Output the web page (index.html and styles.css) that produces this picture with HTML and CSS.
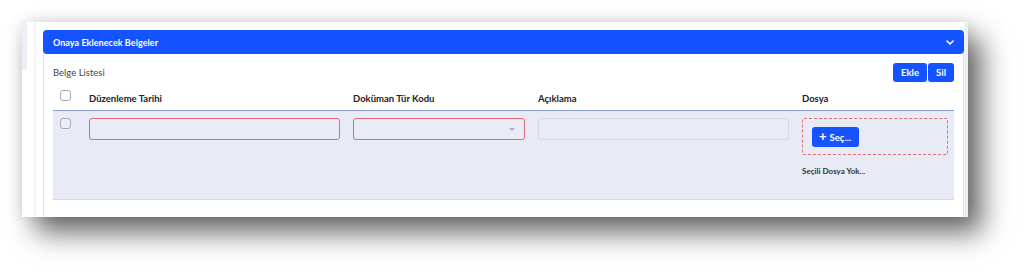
FILE: index.html
```html
<!DOCTYPE html>
<html>
<head>
<meta charset="utf-8">
<title>Onaya Eklenecek Belgeler</title>
<link rel="stylesheet" href="styles.css">
</head>
<body>

<!-- start:shot -->
<div class="shot">

	<div class="side">
		<div class="rail"></div>
		<div class="edge"></div>
	</div>

	<!-- start:card -->
	<div class="card">

		<div class="card_head">
			<span class="card_title">Onaya Eklenecek Belgeler</span>
			<svg class="chevron" width="8" height="5" viewBox="0 0 8 5"><path d="M1 1 L4 4 L7 1" fill="none" stroke="#fff" stroke-width="1.6" stroke-linecap="round" stroke-linejoin="round"/></svg>
		</div>

		<div class="card_body">

			<div class="list_bar">
				<span class="list_title">Belge Listesi</span>
				<div class="btn_group">
					<button class="btn">Ekle</button>
					<button class="btn">Sil</button>
				</div>
			</div>

			<div class="grid head_row">
				<div class="cell check_cell"><span class="check"></span></div>
				<div class="cell">Düzenleme Tarihi</div>
				<div class="cell">Doküman Tür Kodu</div>
				<div class="cell">Açıklama</div>
				<div class="cell last">Dosya</div>
			</div>

			<div class="grid body_row">
				<div class="cell check_cell"><span class="check"></span></div>
				<div class="cell"><div class="field error"></div></div>
				<div class="cell"><div class="field error select"><span class="caret"></span></div></div>
				<div class="cell"><div class="field"></div></div>
				<div class="cell last">
					<div class="drop">
						<button class="btn pick"><span class="plus">+</span> Seç...</button>
					</div>
					<div class="no_file">Seçili Dosya Yok...</div>
				</div>
			</div>

		</div>
	</div>
	<!-- end:card -->

	<div class="scroll"></div>

</div>
<!-- end:shot -->

</body>
</html>
```

FILE: styles.css
```css
html,body,div,span,button {margin:0; padding:0;}
/* ---------- ---------- ---------- STRUCTURE ---------- ---------- ---------- */
html, body {height: 273px; overflow: hidden;}
body {background: #fff; font: 10px Lato, "Open Sans", sans-serif; color: #222; padding: 22px 0 0 22px; box-sizing: border-box;}
.shot {display: flex; width: 946px; height: 195px; background: #fff; overflow: hidden;
	box-shadow: 14px 16px 26px rgba(0,0,0,.58), 0 0 16px rgba(0,0,0,.12);}
.side {display: flex; width: 21px; flex: none;}
.rail {width: 5px; height: 48px; background: #eceff5;}
.edge {width: 2px; margin-left: 7px; background: #f3f4f8;}
.scroll {width: 4px; flex: none; background: #eef0f6;}
/* ---------- ---------- ---------- CARD ---------- ---------- ---------- */
.card {width: 919px; flex: none; margin-top: 8px; border: 1px solid #dde2ee; border-bottom: 0; border-radius: 4px 4px 0 0;}
.card_head {display: flex; align-items: center; justify-content: space-between; height: 24px; margin: -1px -1px 0;
	padding: 0 10px 0 10px; background: #1453ff; border-radius: 4px;}
.card_title {color: #fff; font-weight: bold; font-size: 9px; letter-spacing: .05px;}
.chevron {display: block;}
.card_body {padding: 0 9px;}
.list_bar {display: flex; align-items: center; justify-content: space-between; margin-top: 9px; height: 19px;}
.list_title {color: #444; font-size: 9.5px;}
.btn_group {display: flex; gap: 1px;}
.btn {height: 19px; padding: 0 8px; background: #1453ff; color: #fff; border: 0; border-radius: 3px;
	font: bold 9.5px Lato, sans-serif;}
/* ---------- ---------- ---------- TABLE ---------- ---------- ---------- */
.grid {display: grid; grid-template-columns: 36px 264px 185px 264px 152px;}
.head_row {margin-top: 2px; height: 26px; border-bottom: 1px solid #8b9ccf; align-items: center; font-weight: bold; font-size: 9.5px;}
.head_row .cell {padding-top: 2px;}
.head_row .check_cell {padding-top: 0; margin-top: -4px;}
.body_row {height: 89px; padding-top: 7px; box-sizing: border-box; background: #e8ebf5; border-bottom: 1px solid #d0d8ee; align-items: start;}
.cell {padding-right: 13px;}
.cell.last {padding-right: 6px;}
.check_cell {padding-left: 7px;}
.check {display: block; width: 9px; height: 9px; border: 1px solid #a9abb0; border-radius: 3px; background: #fff;}
.body_row .check {background: #eceef4;}
.field {height: 20px; border: 1px solid #d4d9ec; border-radius: 3px; background: #e9ecf6;}
.field.error {border-color: #e06a6f;}
.select {position: relative;}
.caret {position: absolute; right: 9px; top: 9px; border: 3px solid transparent; border-top: 3px solid #a9b1c9; border-bottom: 0;}
.drop {height: 37px; padding: 8px 0 0 9px; box-sizing: border-box; border: 1px dashed #e06a6f; border-radius: 2px;}
.btn.pick {display: flex; align-items: center; gap: 3px; height: 20px; padding: 0 8px 0 7px; font-size: 9.5px;}
.plus {font-size: 13px; line-height: 1; margin-top: -1px;}
.no_file {margin-top: 11px; font-size: 8px; font-weight: bold; color: #333;}
```
